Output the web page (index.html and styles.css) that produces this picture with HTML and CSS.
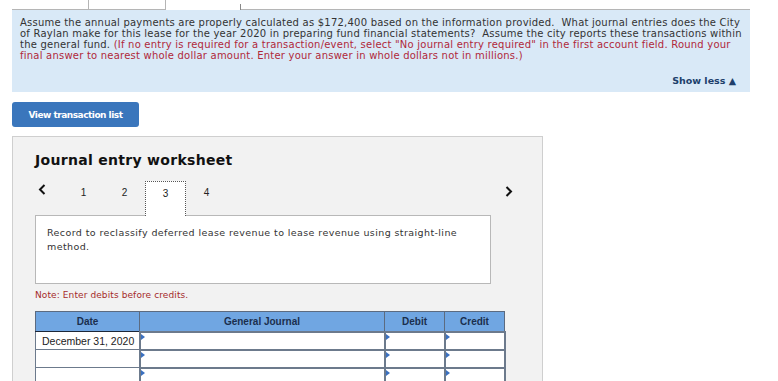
FILE: index.html
```html
<!DOCTYPE html>
<html lang="en">
<head>
    <meta charset="UTF-8">
    <title>Journal entry worksheet</title>
    <link rel="stylesheet" href="styles.css">
</head>
<body>
    <div class="tabs">
        <span class="tab"></span>
        <span class="tab"></span>
        <span class="tab active"></span>
        <span class="tab rest"></span>
    </div>

    <div class="question">
        <p>Assume the annual payments are properly calculated as $172,400 based on the information provided.&nbsp; What journal entries does the City of Raylan make for this lease for the year 2020 in preparing fund financial statements?&nbsp; Assume the city reports these transactions within the general fund. <span class="hint">(If no entry is required for a transaction/event, select "No journal entry required" in the first account field. Round your final answer to nearest whole dollar amount. Enter your answer in whole dollars not in millions.)</span></p>
        <div class="show-less">Show less &#9650;</div>
    </div>

    <button class="view-btn">View transaction list</button>

    <div class="worksheet">
        <h2 class="ws-title">Journal entry worksheet</h2>
        <div class="pager">
            <span class="arrow">
                <svg width="8" height="11" viewBox="0 0 8 11"><polyline points="6.5,1 2,5.5 6.5,10" fill="none" stroke="#111" stroke-width="2"/></svg>
            </span>
            <span class="page">1</span>
            <span class="page">2</span>
            <span class="page current">3</span>
            <span class="page">4</span>
            <span class="arrow right">
                <svg width="8" height="11" viewBox="0 0 8 11"><polyline points="1.5,1 6,5.5 1.5,10" fill="none" stroke="#111" stroke-width="2"/></svg>
            </span>
        </div>
        <div class="desc">Record to reclassify deferred lease revenue to lease revenue using straight-line method.</div>
        <p class="note">Note: Enter debits before credits.</p>
        <table class="je-table">
            <thead>
                <tr>
                    <th class="c-date">Date</th>
                    <th class="c-gj">General Journal</th>
                    <th class="c-dr">Debit</th>
                    <th class="c-cr">Credit</th>
                </tr>
            </thead>
            <tbody>
                <tr>
                    <td class="date">December 31, 2020</td>
                    <td class="inp"></td>
                    <td class="inp"></td>
                    <td class="inp"></td>
                </tr>
                <tr>
                    <td class="date"></td>
                    <td class="inp"></td>
                    <td class="inp"></td>
                    <td class="inp"></td>
                </tr>
                <tr>
                    <td class="date"></td>
                    <td class="inp"></td>
                    <td class="inp"></td>
                    <td class="inp"></td>
                </tr>
            </tbody>
        </table>
    </div>
</body>
</html>
```

FILE: styles.css
```css
* {
  margin: 0;
  padding: 0;
  box-sizing: border-box;
}

body {
  background: #fff;
  font-family: "DejaVu Sans", Verdana, sans-serif;
  color: #333;
  width: 778px;
  height: 381px;
  overflow: hidden;
}

/* top tab strip */
.tabs {
  display: flex;
  height: 10px;
  margin-left: 12px;
  width: 738px;
}

.tab {
  width: 77px;
  border-bottom: 1px solid #b5b5b5;
  border-right: 1px solid #b5b5b5;
}

.tab.active {
  width: 75px;
  border-bottom: none;
  margin-top: 4px;
  border-right-color: #888;
}

.tab.rest {
  flex: 1;
  border-right: none;
  border-bottom: 1px solid #b5b5b5;
}

/* question box */
.question {
  margin-left: 12px;
  width: 738px;
  height: 82px;
  background: #d9e9f7;
  padding: 7px 4px 0 8px;
  font-size: 10px;
  line-height: 11px;
  letter-spacing: 0.22px;
}

.question p {
  color: #333;
}

.hint {
  color: #b0283a;
}

.show-less {
  text-align: right;
  margin-top: 14px;
  padding-right: 10px;
  font-weight: bold;
  font-size: 9.5px;
  letter-spacing: 0;
  color: #203f6b;
}

.view-btn {
  display: block;
  margin: 10px 0 0 12px;
  width: 127px;
  height: 25px;
  border: none;
  border-radius: 3px;
  background: #3a76bc;
  color: #fff;
  font-family: "DejaVu Sans", Verdana, sans-serif;
  font-weight: bold;
  font-size: 9px;
  letter-spacing: -0.5px;
}

/* worksheet panel */
.worksheet {
  margin: 9px 0 0 12px;
  width: 531px;
  height: 260px;
  background: #f2f2f2;
  border: 1px solid #cfcfcf;
  padding: 14px 0 0 22px;
}

.ws-title {
  font-size: 14px;
  font-weight: bold;
  color: #111;
  letter-spacing: 0.3px;
  line-height: 18px;
}

.pager {
  display: flex;
  align-items: flex-start;
  height: 34px;
  margin-top: 12px;
  width: 486px;
}

.arrow {
  width: 28px;
  padding: 3px 0 0 3px;
  line-height: 0;
}

.arrow.right {
  margin-left: auto;
  width: auto;
  padding: 5px 8px 0 0;
}

.page {
  width: 41px;
  height: 34px;
  text-align: center;
  font-family: "Liberation Sans", Arial, sans-serif;
  font-size: 10px;
  color: #222;
  padding-top: 6px;
}

.page.current {
  background: #fff;
  border: 1px dotted #555;
  border-bottom: none;
  position: relative;
  z-index: 1;
  height: 35px;
  margin-bottom: -1px;
}

.desc {
  width: 456px;
  height: 69px;
  background: #fff;
  border: 1px solid #b8b8b8;
  padding: 10px 11px;
  font-size: 9.5px;
  line-height: 14px;
  letter-spacing: 0.4px;
  color: #333;
}

.note {
  margin-top: 6px;
  font-size: 9px;
  color: #a52a2a;
  letter-spacing: 0.1px;
}

/* journal table */
.je-table {
  margin-top: 11px;
  border-collapse: collapse;
  font-family: "Liberation Sans", Arial, sans-serif;
  font-size: 10px;
}

.je-table th {
  background: #70a6e2;
  color: #1b2f4e;
  font-weight: bold;
  height: 20px;
  border: 1px solid #5c6b80;
  border-bottom: 1px solid #1c2738;
  text-align: center;
}

.c-date { width: 104px; }
.c-gj { width: 245px; }
.c-dr { width: 60px; }
.c-cr { width: 60px; }

.je-table td {
  height: 18px;
  border: 2px solid #6c7a8c;
  background: #fff;
  position: relative;
}

.je-table td.date {
  border: 1px solid #6c7a8c;
  padding-left: 6px;
  color: #222;
  font-size: 10.5px;
}

.je-table td.inp::before {
  content: "";
  position: absolute;
  left: 0;
  top: 1px;
  border-left: 4px solid #3a70c0;
  border-top: 3px solid transparent;
  border-bottom: 3px solid transparent;
}
```
